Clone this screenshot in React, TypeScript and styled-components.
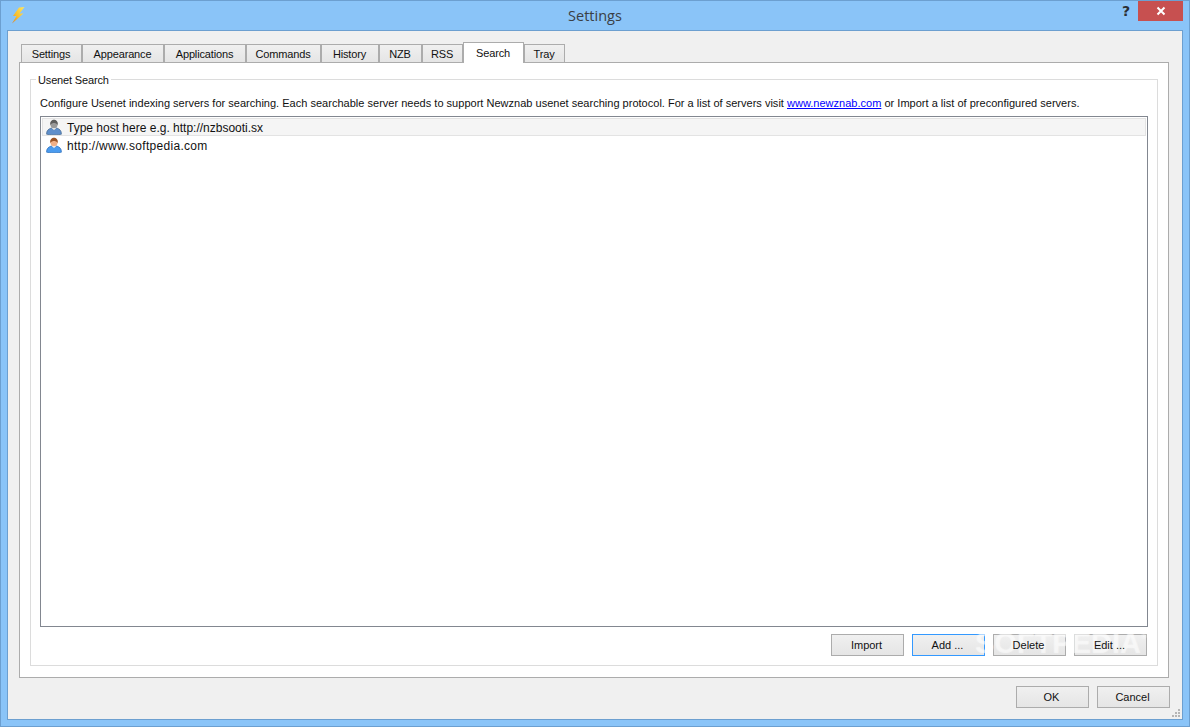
import React from "react";
import styled, { createGlobalStyle } from "styled-components";

const Global = createGlobalStyle`
  html, body { margin: 0; padding: 0; background: #8AC4F8; }
  * { box-sizing: border-box; }
`;
const UI = `"Liberation Sans", Arial, sans-serif`;

const Win = styled.div`
  width: 1190px; height: 727px; position: relative; overflow: hidden;
  display: flex; flex-direction: column;
  background: #8AC4F8; border: 1px solid #6C9FD0; padding: 0 6px 6px;
  font-family: ${UI}; font-size: 11px; color: #111;
`;
const TitleBar = styled.div`
  height: 29px; flex: none; position: relative; display: flex; align-items: center; justify-content: center;
`;
const TitleText = styled.span`
  font-family: "Open Sans", sans-serif; font-size: 14.5px; color: #3a3f45;
`;
const AppIcon = styled.svg`
  position: absolute; left: 3px; top: 5px; width: 16px; height: 18px;
`;
const HelpMark = styled.span`
  position: absolute; right: 53px; top: 2px; font: bold 14px "DejaVu Sans", sans-serif; color: #2b2f33;
`;
const CloseBtn = styled.div`
  position: absolute; right: 0; top: 0; width: 45px; height: 20px; background: #C75050;
  display: flex; align-items: center; justify-content: center;
`;
const Client = styled.div`
  flex: 1; display: flex; flex-direction: column; position: relative; min-height: 0;
  background: #F0F0F0; border: 1px solid #6C9FD0; padding: 11px 12px 11px 11px;
`;
const TabBar = styled.div`
  display: flex; align-items: flex-end; height: 21px; padding-left: 2px; position: relative; z-index: 1; flex: none;
`;
const Tab = styled.div<{ $w: number; $active?: boolean }>`
  width: ${p => p.$w}px; flex: none; display: flex; align-items: center; justify-content: center;
  height: ${p => (p.$active ? 21 : 18)}px;
  margin-bottom: ${p => (p.$active ? 0 : 1)}px;
  padding: 0 1px 0 0;
  border: 1px solid #ACACAC; border-bottom: 0; letter-spacing: -0.15px;
  background: ${p => (p.$active ? "#fff" : "linear-gradient(#F0F0F0, #E5E5E5)")};
`;
const Pane = styled.div`
  flex: 1; min-height: 0; display: flex; background: #fff; border: 1px solid #ACACAC;
  padding: 16px 10px 11px; margin: -1px 1px 0 0;
`;
const Group = styled.div`
  flex: 1; min-width: 0; display: flex; flex-direction: column; position: relative;
  border: 1px solid #DCDCDC; padding: 16px 9px 9px;
`;
const Legend = styled.span`
  position: absolute; left: 5px; top: -6px; background: #fff; padding: 0 2px; line-height: 13px; letter-spacing: -0.15px;
`;
const Desc = styled.div`
  height: 14px; line-height: 14px; margin-bottom: 6px; white-space: nowrap; letter-spacing: 0.015px;
`;
const Link = styled.a`
  color: #0000FF; text-decoration: underline;
`;
const List = styled.div`
  flex: 1; min-height: 0; border: 1px solid #828790; padding: 1px; background: #fff;
`;
const Row = styled.div<{ $sel?: boolean }>`
  height: 18px; display: flex; align-items: center; gap: 5px; padding-left: 3px;
  font-size: 12px; color: #111;
  border: 1px solid ${p => (p.$sel ? "#E3E3E3" : "transparent")};
  background: ${p => (p.$sel ? "#F5F5F5" : "transparent")};
`;
const RowText = styled.span<{ $track?: number }>`
  padding-top: 2px; letter-spacing: ${p => p.$track ?? 0}px;
`;
const ButtonRow = styled.div`
  display: flex; justify-content: flex-end; gap: 8px; margin-top: 7px; padding-right: 1px; flex: none;
`;
const Btn = styled.div<{ $focus?: boolean }>`
  width: 73px; height: 22px; display: flex; align-items: center; justify-content: center;
  border: 1px solid ${p => (p.$focus ? "#3399FF" : "#ACACAC")};
  background: linear-gradient(#F0F0F0, #E5E5E5);
`;
const BtnLabel = styled.span`
  position: relative; z-index: 4; left: -1px;
`;
const DialogRow = styled(ButtonRow)`
  margin-top: 8px; padding-right: 0;
`;
const Watermark = styled.span`
  position: absolute; left: 974px; top: 626px; font: bold 29px "Liberation Sans", sans-serif;
  color: rgba(255,255,255,.42); pointer-events: none; z-index: 3;
  text-shadow: 0 0 2px rgba(255,255,255,.4);
`;
const Reg = styled.span`
  font-size: 8px; vertical-align: 14px; font-weight: normal;
`;
const Grip = styled.svg`
  position: absolute; right: 1px; bottom: 1px; width: 10px; height: 10px;
`;

function UserIcon({ dim }: { dim?: boolean }) {
  const skin = dim ? "#9A9A9A" : "#F0B088";
  const hair = dim ? "#5E5E5E" : "#9A5426";
  return (
    <svg width="16" height="16" viewBox="0 0 16 16">
      <path d="M.6 15.200c-.3-3.700 2.400-5.700 4.900-6.200L8 10.500 10.500 9c2.500.5 5.200 2.500 4.900 6.200-2 .8-12.800.8-14.800 0z" fill={dim ? "#5F8FCB" : "#4A9BEF"} stroke={dim ? "#45688F" : "#2A6CB8"} strokeWidth=".7" />
      <path d="M6 9.500 8 11l2-1.500-1-1H7z" fill="#F4F4F4" />
      <ellipse cx="8" cy="5.300" rx="3.600" ry="4" fill={skin} />
      <path d="M4.300 6C3.800 2.400 6 .8 8 .8s4.200 1.600 3.700 5.200C10.800 4.300 9.200 3.900 8 3.900S5.200 4.300 4.300 6z" fill={hair} />
    </svg>
  );
}

const tabs: [string, number][] = [
  ["Settings", 61], ["Appearance", 82], ["Applications", 82], ["Commands", 75], ["History", 58],
  ["NZB", 43], ["RSS", 41], ["Search", 61], ["Tray", 41],
];

export default function App() {
  return (
    <>
      <Global />
      <Win>
        <TitleBar>
          <AppIcon viewBox="0 0 16 18">
            <defs>
              <linearGradient id="bolt" x1="1" y1="0" x2="0" y2="1">
                <stop offset="0" stopColor="#FFE860" />
                <stop offset=".6" stopColor="#F8BC2C" />
                <stop offset="1" stopColor="#D8802C" />
              </linearGradient>
            </defs>
            <path d="M9 1.500 3 10 6.500 10 2 17.500 13.500 7.500 9.500 7.500 14.500 1z" fill="url(#bolt)" />
          </AppIcon>
          <TitleText>Settings</TitleText>
          <HelpMark>?</HelpMark>
          <CloseBtn>
            <svg width="10" height="10" viewBox="0 0 10 10">
              <path d="M1.500 1.500 8.500 8.500M8.500 1.500 1.500 8.500" stroke="#fff" strokeWidth="2" />
            </svg>
          </CloseBtn>
        </TitleBar>
        <Client>
          <TabBar>
            {tabs.map(([t, w]) => (
              <Tab key={t} $w={w} $active={t === "Search"}>{t}</Tab>
            ))}
          </TabBar>
          <Pane>
            <Group>
              <Legend>Usenet Search</Legend>
              <Desc>
                Configure Usenet indexing servers for searching. Each searchable server needs to support Newznab usenet searching protocol. For a list of servers visit <Link>www.newznab.com</Link> or Import a list of preconfigured servers.
              </Desc>
              <List>
                <Row $sel><UserIcon dim /><RowText>Type host here e.g. http://nzbsooti.sx</RowText></Row>
                <Row><UserIcon /><RowText $track={0.3}>http://www.softpedia.com</RowText></Row>
              </List>
              <ButtonRow>
                <Btn><BtnLabel>Import</BtnLabel></Btn>
                <Btn $focus><BtnLabel>Add ...</BtnLabel></Btn>
                <Btn><BtnLabel>Delete</BtnLabel></Btn>
                <Btn><BtnLabel>Edit ...</BtnLabel></Btn>
              </ButtonRow>
            </Group>
          </Pane>
          <DialogRow>
            <Btn><BtnLabel>OK</BtnLabel></Btn>
            <Btn><BtnLabel>Cancel</BtnLabel></Btn>
          </DialogRow>
          <Grip viewBox="0 0 10 10">
            <g fill="#B5B5B5">
              <rect x="7" y="1" width="2" height="2" />
              <rect x="4" y="4" width="2" height="2" /><rect x="7" y="4" width="2" height="2" />
              <rect x="1" y="7" width="2" height="2" /><rect x="4" y="7" width="2" height="2" /><rect x="7" y="7" width="2" height="2" />
            </g>
          </Grip>
        </Client>
        <Watermark>SOFTPEDIA<Reg>®</Reg></Watermark>
      </Win>
    </>
  );
}
